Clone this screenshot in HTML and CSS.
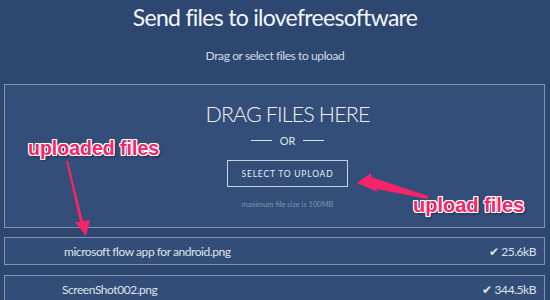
FILE: index.html
```html
<!DOCTYPE html>
<html lang="en">
<head>
    <meta charset="UTF-8" />
    <title>Send files</title>
    <link rel="stylesheet" href="styles.css">
</head>
<body>
<h1>Send files to ilovefreesoftware</h1>
<p class="lead">Drag or select files to upload</p>

<div class="dropzone">
    <div class="drop-title">DRAG FILES HERE</div>
    <div class="or"><span class="rule"></span>OR<span class="rule"></span></div>
    <button class="select">SELECT TO UPLOAD</button>
    <div class="limit">maximum file size is 100MB</div>
</div>

<ul class="files">
    <li><span class="name">microsoft flow app for android.png</span><span class="size">&#10004; 25.6kB</span></li>
    <li><span class="name">ScreenShot002.png</span><span class="size">&#10004; 344.5kB</span></li>
</ul>

<!-- annotations -->
<div class="note note-files">uploaded files</div>
<div class="note note-upload">upload files</div>
<svg class="arrows" width="550" height="300" viewBox="0 0 550 300">
    <polygon points="66,161 68,161 83,221 90,220 86,236 75,222 80,222" fill="#f7246a"/>
    <polygon points="428,196 428,199 376,189 378,192 357,183 371,173 371,177" fill="#f7246a"/>
</svg>
</body>
</html>
```

FILE: styles.css
```css
* { box-sizing: border-box; }
body {
    margin: 0;
    width: 550px;
    height: 300px;
    overflow: hidden;
    position: relative;
    background: #2d4770;
    font-family: Lato, 'Open Sans', sans-serif;
    color: #e8edf4;
}
h1 {
    margin: 0;
    padding-top: 3px;
    font-size: 23px;
    font-weight: 400;
    letter-spacing: -0.7px;
    text-align: center;
    color: #f4f6fa;
}
.lead {
    margin: 17px 0 0;
    font-size: 12px;
    letter-spacing: -0.4px;
    text-align: center;
    color: #d3dbe6;
}

.dropzone {
    margin: 21px 5px 0 4px;
    height: 144px;
    border: 1px solid #8192ad;
    background: #334e78;
    display: flex;
    flex-direction: column;
    align-items: center;
    padding: 16px 0 0 26px;
}
.drop-title {
    font-size: 21.5px;
    font-weight: 300;
    letter-spacing: -0.9px;
    color: #eef2f7;
}
.or {
    margin-top: 7px;
    display: flex;
    align-items: center;
    gap: 8px;
    font-size: 11px;
    color: #dfe5ee;
}
.or .rule {
    width: 21px;
    height: 1px;
    background: #dfe5ee;
}
.select {
    margin-top: 13px;
    width: 121px;
    height: 27px;
    background: transparent;
    border: 1px solid #c8d2e0;
    color: #e8edf4;
    font-family: inherit;
    font-size: 8.5px;
    letter-spacing: 0.8px;
}
.limit {
    margin-top: 13px;
    font-size: 7.5px;
    color: #7f93b2;
}

.files {
    list-style: none;
    margin: 9px 5px 0 4px;
    padding: 0;
    display: flex;
    flex-direction: column;
    gap: 10px;
}
.files li {
    height: 28px;
    border: 1px solid #8192ad;
    background: #324d77;
    display: flex;
    align-items: center;
    justify-content: space-between;
    padding: 0 8px 0 59px;
    font-size: 12px;
    letter-spacing: -0.45px;
    color: #dde3ec;
}
.files li:nth-child(2) { padding-left: 57px; }
.size { color: #dde3ec; }

.note {
    position: absolute;
    font-family: 'Liberation Sans', Arial, sans-serif;
    font-weight: bold;
    color: #f7246a;
    text-shadow: -1px -1px 0 #fff, 1px -1px 0 #fff, -1px 1px 0 #fff, 1px 1px 0 #fff,
                 0 1px 0 #fff, 0 -1px 0 #fff, 1px 0 0 #fff, -1px 0 0 #fff, 2px 2px 2px #1a2a44;
}
.note-files { left: 28px; top: 137px; font-size: 19.5px; }
.note-upload { left: 413px; top: 194px; font-size: 20px; }
.arrows {
    position: absolute;
    left: 0;
    top: 0;
}
```
